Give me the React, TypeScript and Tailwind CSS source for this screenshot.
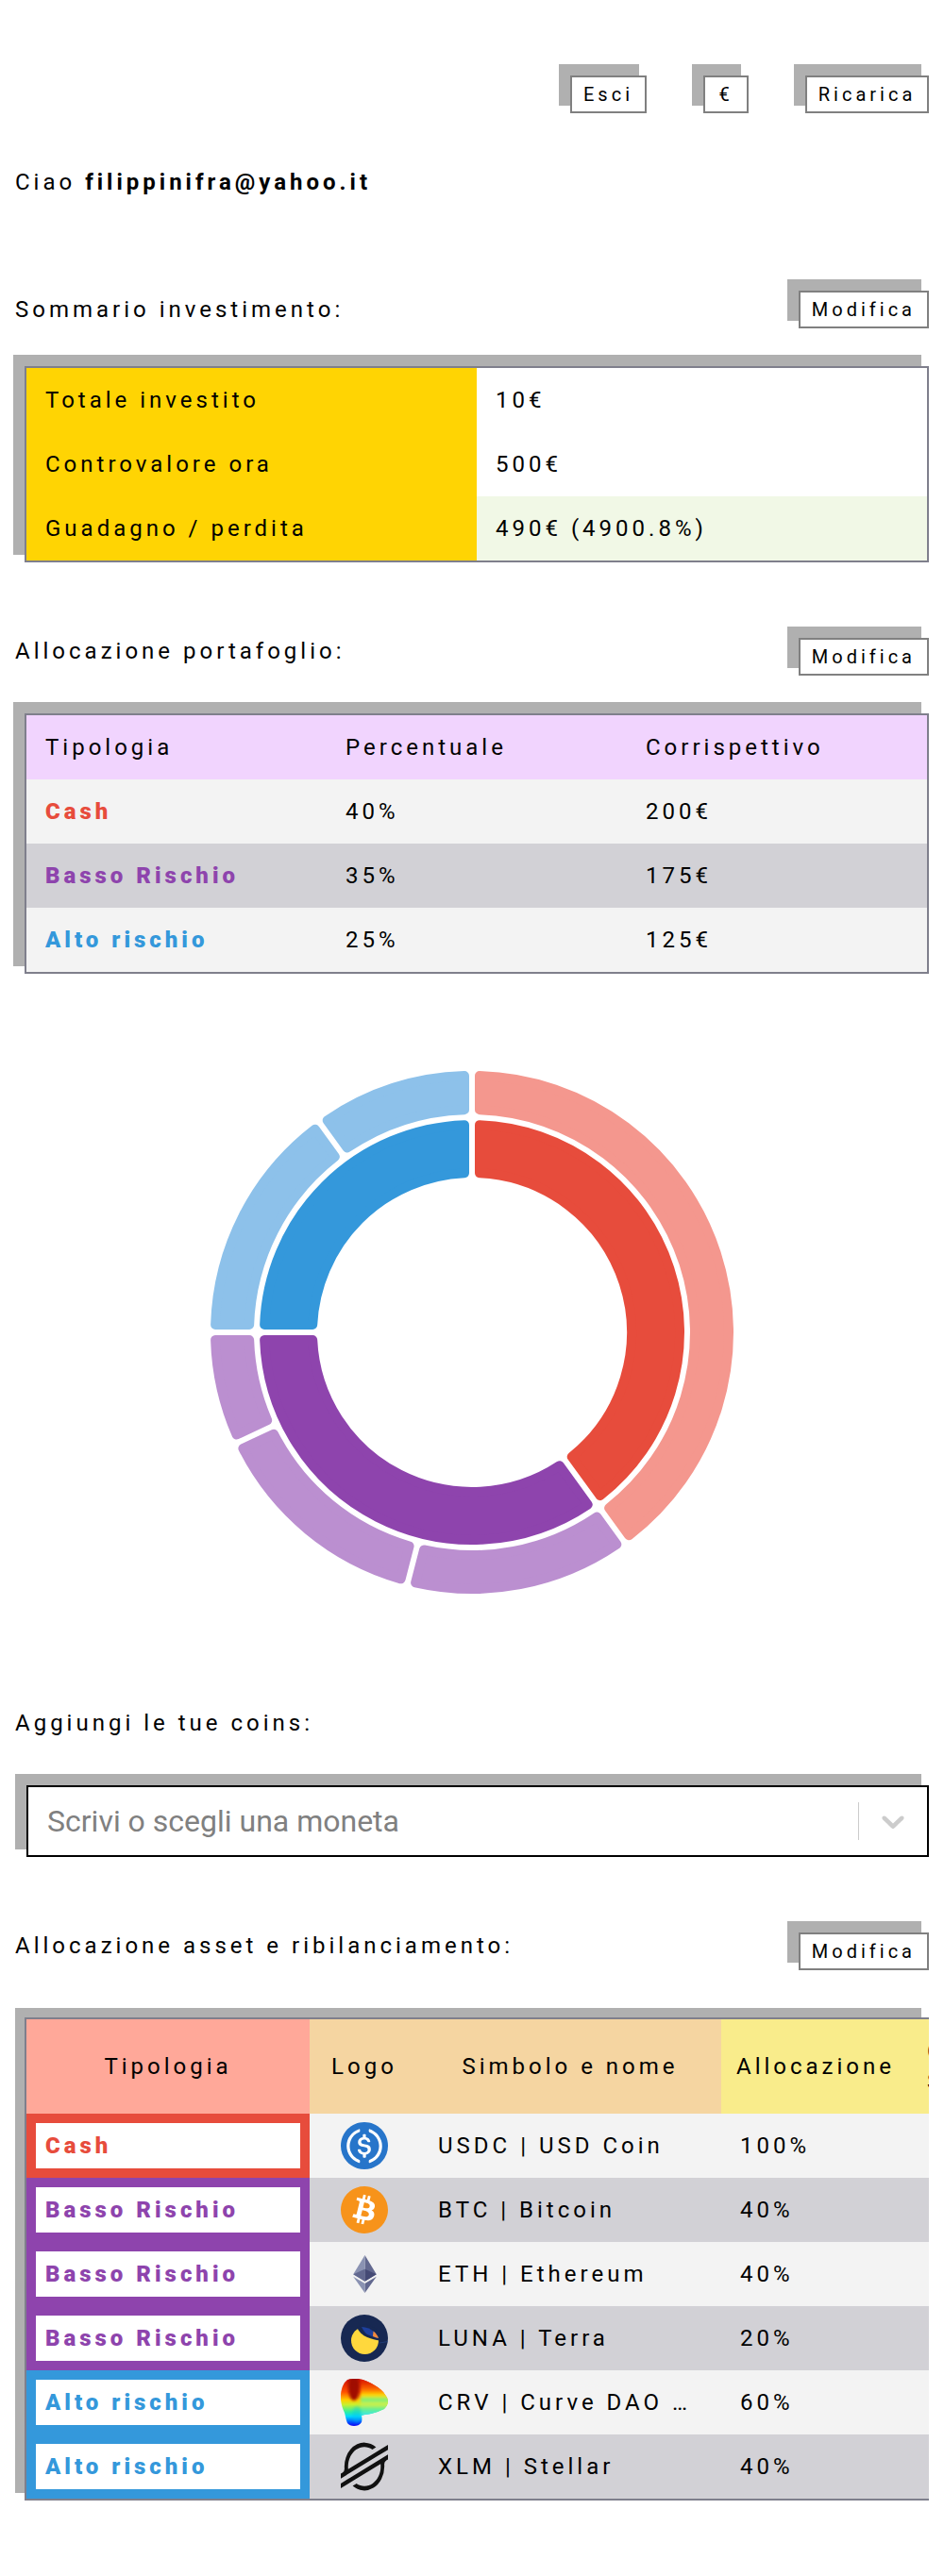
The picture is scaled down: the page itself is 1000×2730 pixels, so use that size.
import React from "react";
import { SiStellar } from "react-icons/si";

const btn =
  "block bg-white border-2 border-[#808080] text-[20px] leading-[36px] tracking-[4px] text-black shadow-[-10px_-10px_0_2px_#b0b0b0]";

function Btn({ label, className = "" }: { label: string; className?: string }) {
  return <div className={`${btn} ${className}`}>{label}</div>;
}

function sector(r0: number, r1: number, a0: number, a1: number) {
  const gap = 3;
  const c = 5;
  const R0 = r0 + c;
  const R1 = r1 - c;
  const d = gap + c;
  const cx = 300;
  const cy = 300;
  const rad = (x: number) => (x * Math.PI) / 180;
  const pt = (R: number, a: number) =>
    `${(cx + R * Math.sin(a)).toFixed(2)} ${(cy - R * Math.cos(a)).toFixed(2)}`;
  const s = rad(a0);
  const e = rad(a1);
  const o1 = s + Math.asin(d / R1);
  const o2 = e - Math.asin(d / R1);
  const i1 = s + Math.asin(d / R0);
  const i2 = e - Math.asin(d / R0);
  const largeO = o2 - o1 > Math.PI ? 1 : 0;
  const largeI = i2 - i1 > Math.PI ? 1 : 0;
  return `M${pt(R1, o1)}A${R1} ${R1} 0 ${largeO} 1 ${pt(R1, o2)}L${pt(R0, i2)}A${R0} ${R0} 0 ${largeI} 0 ${pt(R0, i1)}Z`;
}

const slices: [number, number, number, number, string][] = [
  [164, 225, 0, 144, "#e74c3c"],
  [164, 225, 144, 270, "#8e44ad"],
  [164, 225, 270, 360, "#3498db"],
  [231, 277, 0, 144, "#f4978e"],
  [231, 277, 144, 194.4, "#bb8fd0"],
  [231, 277, 194.4, 244.8, "#bb8fd0"],
  [231, 277, 244.8, 270, "#bb8fd0"],
  [231, 277, 270, 324, "#8dc1ea"],
  [231, 277, 324, 360, "#8dc1ea"],
];

function Donut() {
  return (
    <svg width="600" height="600" viewBox="0 0 600 600" className="block">
      {slices.map(([r0, r1, a0, a1, col], i) => (
        <path key={i} d={sector(r0, r1, a0, a1)} fill={col} stroke={col} strokeWidth={10} strokeLinejoin="round" />
      ))}
    </svg>
  );
}

function Usdc() {
  return (
    <svg width="50" height="50" viewBox="0 0 2000 2000" className="blur-[0.4px]">
      <path d="M1000 2000c554.17 0 1000-445.83 1000-1000S1554.17 0 1000 0 0 445.83 0 1000s445.83 1000 1000 1000z" fill="#2775ca" />
      <path d="M1275 1158.33c0-145.83-87.5-195.83-262.5-216.66-125-16.67-150-50-150-108.34s41.67-95.83 125-95.83c75 0 116.67 25 137.5 87.5 4.17 12.5 16.67 20.83 29.17 20.83h66.66c16.67 0 29.17-12.5 29.17-29.16v-4.17c-16.67-91.67-91.67-162.5-187.5-170.83v-100c0-16.67-12.5-29.17-33.33-33.34h-62.5c-16.67 0-29.17 12.5-33.34 33.34v95.83c-125 16.67-204.16 100-204.16 204.17 0 137.5 83.33 191.66 258.33 212.5 116.67 20.83 154.17 45.83 154.17 112.5s-58.34 112.5-137.5 112.5c-108.34 0-145.84-45.84-158.34-108.34-4.16-16.66-16.66-25-29.16-25h-70.84c-16.66 0-29.16 12.5-29.16 29.17v4.17c16.66 104.16 83.33 179.16 220.83 200v100c0 16.66 12.5 29.16 33.33 33.33h62.5c16.67 0 29.17-12.5 33.34-33.33v-100c125-20.84 208.33-108.34 208.33-220.84z" fill="#fff" />
      <path d="M787.5 1595.83c-325-116.66-491.67-479.16-370.83-800 62.5-175 200-308.33 370.83-370.83 16.67-8.33 25-20.83 25-41.67V325c0-16.67-8.33-29.17-25-33.33-4.17 0-12.5 0-16.67 4.16-395.83 125-612.5 545.84-487.5 941.67 75 233.33 254.17 412.5 487.5 487.5 16.67 8.33 33.34 0 37.5-16.67 4.17-4.16 4.17-8.33 4.17-16.66v-58.34c0-12.5-12.5-29.16-25-37.5zM1229.17 295.83c-16.67-8.33-33.34 0-37.5 16.67-4.17 4.17-4.17 8.33-4.17 16.67v58.33c0 16.67 12.5 33.33 25 41.67 325 116.66 491.67 479.16 370.83 800-62.5 175-200 308.33-370.83 370.83-16.67 8.33-25 20.83-25 41.67V1700c0 16.67 8.33 29.17 25 33.33 4.17 0 12.5 0 16.67-4.16 395.83-125 612.5-545.84 487.5-941.67-75-237.5-258.34-416.67-487.5-491.67z" fill="#fff" />
    </svg>
  );
}

function Btc() {
  return (
    <svg width="50" height="50" viewBox="0 0 64 64" className="blur-[0.4px]">
      <path fill="#f7931a" d="M63.04 39.741c-4.274 17.143-21.638 27.575-38.783 23.301C7.12 58.768-3.313 41.404.962 24.262 5.234 7.117 22.597-3.317 39.737.957c17.144 4.274 27.576 21.64 23.302 38.784z" />
      <path fill="#fff" d="M46.11 27.441c.636-4.258-2.606-6.547-7.039-8.074l1.438-5.768-3.512-.875-1.4 5.616c-.922-.23-1.87-.447-2.812-.662l1.41-5.653-3.509-.875-1.439 5.766c-.764-.174-1.514-.346-2.242-.527l.004-.018-4.842-1.209-.934 3.75s2.605.597 2.55.634c1.422.355 1.68 1.296 1.636 2.042l-1.638 6.571c.098.025.225.061.365.117l-.37-.092-2.297 9.205c-.174.432-.615 1.08-1.609.834.035.051-2.552-.637-2.552-.637l-1.743 4.02 4.57 1.139c.85.213 1.683.436 2.502.646l-1.453 5.835 3.507.875 1.44-5.772c.957.26 1.887.5 2.797.726L27.504 50.8l3.511.875 1.453-5.823c5.987 1.133 10.49.676 12.383-4.738 1.527-4.36-.075-6.875-3.225-8.516 2.294-.531 4.022-2.04 4.483-5.157zM38.087 38.69c-1.086 4.36-8.426 2.004-10.807 1.412l1.928-7.729c2.38.594 10.011 1.77 8.88 6.317zm1.085-11.312c-.99 3.966-7.1 1.951-9.083 1.457l1.748-7.01c1.983.494 8.367 1.416 7.335 5.553z" />
    </svg>
  );
}

function Eth() {
  return (
    <svg width="25" height="40" viewBox="0 0 784.37 1277.39" className="blur-[0.4px]">
      <polygon fill="#62688f" points="392.07,0 392.07,472.33 392.07,882.29 784.13,650.54" />
      <polygon fill="#8a92b2" points="392.06,0 0,650.54 392.06,882.29 392.06,472.33" />
      <polygon fill="#62688f" points="392.07,956.52 392.07,1277.38 784.37,724.89" />
      <polygon fill="#8a92b2" points="392.07,1277.38 392.07,956.52 0,724.89" />
      <polygon fill="#454a75" points="392.07,882.29 784.13,650.54 392.07,472.33" />
      <polygon fill="#62688f" points="0,650.54 392.07,882.29 392.07,472.33" />
    </svg>
  );
}

function Luna() {
  return (
    <svg width="50" height="50" viewBox="0 0 50 50" className="blur-[0.4px]">
      <circle cx="25" cy="25" r="25" fill="#172852" />
      <circle cx="25.5" cy="27.5" r="14.5" fill="#ffd83d" />
      <path d="M17 13.5C19 18 23 22 28 24C33 26 37 27 41 27.5C43 22 39 16 33 12.5C28 10 21 10 17 13.5Z" fill="#172852" />
      <path d="M22 13C27 13 32 15 36 19C37.5 20.5 39 22.5 40 25C36 24 31 22.5 28 21C25.5 19.5 23.5 16 22 13Z" fill="#1e3f9c" />
      <path d="M34.5 17.5C37 19.5 39 22 40 25C38 24.5 36 24 34 23C34 21 34.5 19 34.5 17.5Z" fill="#f4893b" />
      <path d="M41 30L50 28.5" stroke="#2a4a8f" strokeWidth="0.6" />
    </svg>
  );
}

function Crv() {
  const blob =
    "M7 1C10 0 15 -0.3 19 0C25 1 31 4 36 7C41 10 45 13 47 17C49 19 50 22 50 24C50 27 48 30 46 32C41 34 37 36 32 37C29 37.5 25 38 22 39C22.5 42 22.5 44 22 46C20 49 17 50 14 50C11 50 8.5 49 7 47C5.5 43 5 40 4 36C2 32 0.5 27 0 22C-0.3 18 0 14 1 11C1.5 8 3 6 4 4C5 3 6 2 7 1Z";
  return (
    <svg width="50" height="50" viewBox="0 0 50 50" className="blur-[0.4px]">
      <defs>
        <linearGradient id="crvV" gradientUnits="userSpaceOnUse" x1="0" y1="0" x2="0" y2="50">
          <stop offset="0" stopColor="#d01000" />
          <stop offset="0.28" stopColor="#ff5000" />
          <stop offset="0.45" stopColor="#ffd000" />
          <stop offset="0.55" stopColor="#c8f030" />
          <stop offset="0.7" stopColor="#30f0a0" />
          <stop offset="0.8" stopColor="#00d8ff" />
          <stop offset="0.92" stopColor="#0050ff" />
          <stop offset="1" stopColor="#1000f0" />
        </linearGradient>
        <linearGradient id="crvL" gradientUnits="userSpaceOnUse" x1="0" y1="3" x2="0" y2="38">
          <stop offset="0" stopColor="#e02000" />
          <stop offset="0.25" stopColor="#ff7000" />
          <stop offset="0.42" stopColor="#ffe000" />
          <stop offset="0.55" stopColor="#70f080" />
          <stop offset="0.68" stopColor="#d8f040" />
          <stop offset="0.84" stopColor="#60f090" />
          <stop offset="1" stopColor="#40e8e0" />
        </linearGradient>
        <filter id="crvB" x="-40%" y="-40%" width="180%" height="180%">
          <feGaussianBlur stdDeviation="1.6" />
        </filter>
        <clipPath id="crvC">
          <path d={blob} />
        </clipPath>
      </defs>
      <path d={blob} fill="url(#crvV)" />
      <g clipPath="url(#crvC)">
        <path d="M21 0H52V40H21Z" fill="url(#crvL)" filter="url(#crvB)" />
        <ellipse cx="14" cy="9" rx="6" ry="14" fill="#a00a00" filter="url(#crvB)" />
        <ellipse cx="17" cy="38" rx="5" ry="9" fill="#00c0f0" opacity="0.35" filter="url(#crvB)" />
      </g>
    </svg>
  );
}

function Xlm() {
  return (
    <div className="blur-[0.4px] text-[#111] leading-none">
      <SiStellar size={50} className="scale-y-[1.2]" />
    </div>
  );
}

const coins = [
  { type: "Cash", kind: "red", logo: <Usdc />, name: "USDC | USD Coin", alloc: "100%" },
  { type: "Basso Rischio", kind: "purple", logo: <Btc />, name: "BTC | Bitcoin", alloc: "40%" },
  { type: "Basso Rischio", kind: "purple", logo: <Eth />, name: "ETH | Ethereum", alloc: "40%" },
  { type: "Basso Rischio", kind: "purple", logo: <Luna />, name: "LUNA | Terra", alloc: "20%" },
  { type: "Alto rischio", kind: "blue", logo: <Crv />, name: "CRV | Curve DAO …", alloc: "60%" },
  { type: "Alto rischio", kind: "blue", logo: <Xlm />, name: "XLM | Stellar", alloc: "40%" },
];

const tagBg: Record<string, string> = { red: "bg-[#e74c3c]", purple: "bg-[#8e44ad]", blue: "bg-[#3498db]" };
const tagText: Record<string, string> = { red: "text-[#e74c3c]", purple: "text-[#8e44ad]", blue: "text-[#3498db]" };

const alloc = [
  { t: "Cash", k: "red", p: "40%", v: "200€", bg: "bg-[#f3f3f3]" },
  { t: "Basso Rischio", k: "purple", p: "35%", v: "175€", bg: "bg-[#d2d1d6]" },
  { t: "Alto rischio", k: "blue", p: "25%", v: "125€", bg: "bg-[#f3f3f3]" },
];

function SectionHead({ title, className = "", raised = false }: { title: string; className?: string; raised?: boolean }) {
  return (
    <div className={`flex justify-between pl-[16px] ${raised ? "items-start" : "items-center"} ${className}`}>
      <div className={raised ? "-mt-[2px]" : ""}>{title}</div>
      <Btn label="Modifica" className="px-[12px]" />
    </div>
  );
}

export default function App() {
  return (
    <div className="w-[1000px] h-[2730px] pr-[16px] bg-white text-black text-[24px] leading-[32px] tracking-[4px] font-['Roboto',sans-serif] overflow-hidden">
      <div className="flex justify-end pt-[80px] gap-[60px]">
        <Btn label="Esci" className="w-[81px] text-center" />
        <Btn label="€" className="w-[48px] text-center" />
        <Btn label="Ricarica" className="w-[131px] text-center" />
      </div>

      <div className="pl-[16px] mt-[57px]">
        Ciao <b className="font-bold">filippinifra@yahoo.it</b>
      </div>

      <SectionHead title="Sommario investimento:" className="mt-[99px]" />

      <div className="ml-[26px] mt-[40px] border-2 border-[#7f7f8c] shadow-[-10px_-10px_0_2px_#b0b0b0] grid grid-cols-2 bg-white">
        <div className="bg-[#ffd403]">
          <div className="h-[68px] px-[20px] flex items-center">Totale investito</div>
          <div className="h-[68px] px-[20px] flex items-center">Controvalore ora</div>
          <div className="h-[68px] px-[20px] flex items-center">Guadagno / perdita</div>
        </div>
        <div>
          <div className="h-[68px] px-[20px] flex items-center">10€</div>
          <div className="h-[68px] px-[20px] flex items-center">500€</div>
          <div className="h-[68px] px-[20px] flex items-center bg-[#f1f8e6]">490€ (4900.8%)</div>
        </div>
      </div>

      <SectionHead title="Allocazione portafoglio:" className="mt-[80px]" raised />

      <div className="ml-[26px] mt-[40px] border-2 border-[#7f7f8c] shadow-[-10px_-10px_0_2px_#b0b0b0] bg-white">
        <div className="grid grid-cols-3 h-[68px] bg-[#f1d4fe] items-center">
          <div className="px-[20px]">Tipologia</div>
          <div className="px-[20px]">Percentuale</div>
          <div className="px-[20px]">Corrispettivo</div>
        </div>
        {alloc.map((r) => (
          <div key={r.t} className={`grid grid-cols-3 h-[68px] items-center ${r.bg}`}>
            <div className={`px-[20px] font-black ${tagText[r.k]}`}>{r.t}</div>
            <div className="px-[20px]">{r.p}</div>
            <div className="px-[20px]">{r.v}</div>
          </div>
        ))}
      </div>

      <div className="mt-[80px] ml-[200px]">
        <Donut />
      </div>

      <div className="pl-[16px] mt-[98px]">Aggiungi le tue coins:</div>

      <div className="ml-[28px] mt-[50px] h-[76px] border-2 border-black bg-white shadow-[-10px_-10px_0_2px_#b0b0b0] flex items-center pl-[20px]">
        <div className="flex-1 text-[32px] tracking-normal text-[#808080]">Scrivi o scegli una moneta</div>
        <div className="w-[1px] h-[40px] bg-[#cccccc]" />
        <svg width="40" height="40" viewBox="0 0 20 20" className="ml-[16px] mr-[16px] fill-[#cccccc]">
          <path d="M4.516 7.548c.436-.446 1.043-.481 1.576 0L10 11.295l3.908-3.747c.533-.481 1.141-.446 1.574 0 .436.445.408 1.197 0 1.615-.406.418-4.695 4.502-4.695 4.502a1.095 1.095 0 01-1.576 0S4.924 9.581 4.516 9.163s-.436-1.17 0-1.615z" />
        </svg>
      </div>

      <SectionHead title="Allocazione asset e ribilanciamento:" className="mt-[80px]" raised />

      <div className="ml-[26px] mt-[50px] border-y-2 border-l-2 border-[#7f7f8c] shadow-[-9px_-9px_0_1px_#b0b0b0] bg-white overflow-hidden">
        <div className="flex flex-col w-[1200px]">
          <div className="flex h-[100px] items-center text-center">
            <div className="w-[300px] h-full flex items-center justify-center bg-[#ffa899]">Tipologia</div>
            <div className="w-[116px] h-full flex items-center justify-center bg-[#f5d5a1]">Logo</div>
            <div className="w-[320px] h-full flex items-center justify-center bg-[#f5d5a1]">Simbolo e nome</div>
            <div className="w-[200px] h-full flex items-center justify-center bg-[#f9ec8b]">Allocazione</div>
            <div className="flex-1 h-full flex items-center pl-[18px] bg-[#f9ec8b] text-left">
              <span>
                Controvalore
                <br />
                Stimato
              </span>
            </div>
          </div>
          {coins.map((c, i) => (
            <div key={i} className={`flex h-[68px] items-center ${i % 2 === 0 ? "bg-[#f3f3f3]" : "bg-[#d2d1d6]"}`}>
              <div className={`w-[300px] h-full p-[10px] ${tagBg[c.kind]}`}>
                <div className={`h-full bg-white pl-[10px] flex items-center font-black ${tagText[c.kind]}`}>{c.type}</div>
              </div>
              <div className="w-[116px] h-full flex items-center justify-center">{c.logo}</div>
              <div className="w-[320px] pl-[20px] pr-[25px] whitespace-nowrap">{c.name}</div>
              <div className="w-[200px] px-[20px]">{c.alloc}</div>
            </div>
          ))}
        </div>
      </div>
    </div>
  );
}
